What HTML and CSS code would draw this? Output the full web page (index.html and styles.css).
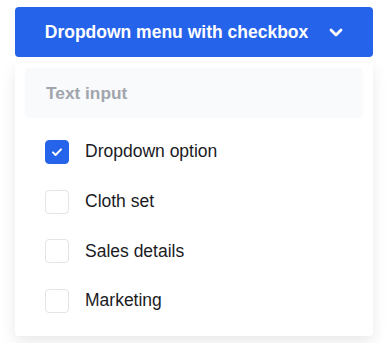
FILE: index.html
```html
<!DOCTYPE html>
<html lang="en">
<head>
    <meta charset="UTF-8">
    <meta name="viewport" content="width=device-width, initial-scale=1.0">
    <title>Dropdown menu with checkbox</title>
    <link rel="stylesheet" href="styles.css">
</head>
<body>
    <div class="dropdown">
        <button class="dropdown-toggle" type="button">
            <span>Dropdown menu with checkbox</span>
            <svg class="chevron" width="14" height="9" viewBox="0 0 14 9" fill="none">
                <path d="M2 2l5 5 5-5" stroke="#fff" stroke-width="2.8" stroke-linecap="round" stroke-linejoin="round"/>
            </svg>
        </button>

        <div class="dropdown-menu">
            <input class="search" type="text" placeholder="Text input">

            <ul class="options">
                <li class="option">
                    <span class="box checked">
                        <svg width="14" height="14" viewBox="0 0 14 14" fill="none">
                            <path d="M3 7.4l2.6 2.6L11 4.4" stroke="#fff" stroke-width="2" stroke-linecap="round" stroke-linejoin="round"/>
                        </svg>
                    </span>
                    <span class="label">Dropdown option</span>
                </li>
                <li class="option">
                    <span class="box"></span>
                    <span class="label">Cloth set</span>
                </li>
                <li class="option">
                    <span class="box"></span>
                    <span class="label">Sales details</span>
                </li>
                <li class="option">
                    <span class="box"></span>
                    <span class="label">Marketing</span>
                </li>
            </ul>
        </div>
    </div>
</body>
</html>
```

FILE: styles.css
```css
body {
    margin: 0;
    background: #ffffff;
    font-family: 'Liberation Sans', Arial, sans-serif;
}

.dropdown {
    width: 358px;
    margin: 7px 15px;
}

.dropdown-toggle {
    width: 100%;
    height: 50px;
    display: flex;
    align-items: center;
    justify-content: center;
    gap: 21px;
    padding: 0;
    border: none;
    border-radius: 4px;
    background-color: #2563eb;
    color: #ffffff;
    font-family: inherit;
    font-size: 17.5px;
    font-weight: bold;
    cursor: pointer;
}

.chevron {
    display: block;
}

.dropdown-menu {
    margin-top: 6px;
    padding: 5px 10px 10px;
    background: #ffffff;
    border-radius: 4px;
    box-shadow: 0 6px 16px rgba(0,0,0,0.09);
}

.search {
    display: block;
    width: 100%;
    height: 50px;
    box-sizing: border-box;
    padding: 0 21px;
    border: none;
    border-radius: 4px;
    background-color: #f9fafb;
    font-family: inherit;
    font-size: 17.3px;
    font-weight: bold;
    outline: none;
}

.search::placeholder {
    color: #a1a5ad;
}

.options {
    list-style: none;
    margin: 9px 0 0;
    padding: 0;
}

.option {
    height: 49.7px;
    display: flex;
    align-items: center;
    gap: 16px;
    padding-left: 20px;
}

.box {
    width: 24px;
    height: 24px;
    box-sizing: border-box;
    border: 1px solid #e2e4e8;
    border-radius: 4px;
    display: flex;
    align-items: center;
    justify-content: center;
}

.box.checked {
    background-color: #2563eb;
    border-color: #2563eb;
}

.label {
    font-size: 17.5px;
    color: #1b1b1f;
}
```
